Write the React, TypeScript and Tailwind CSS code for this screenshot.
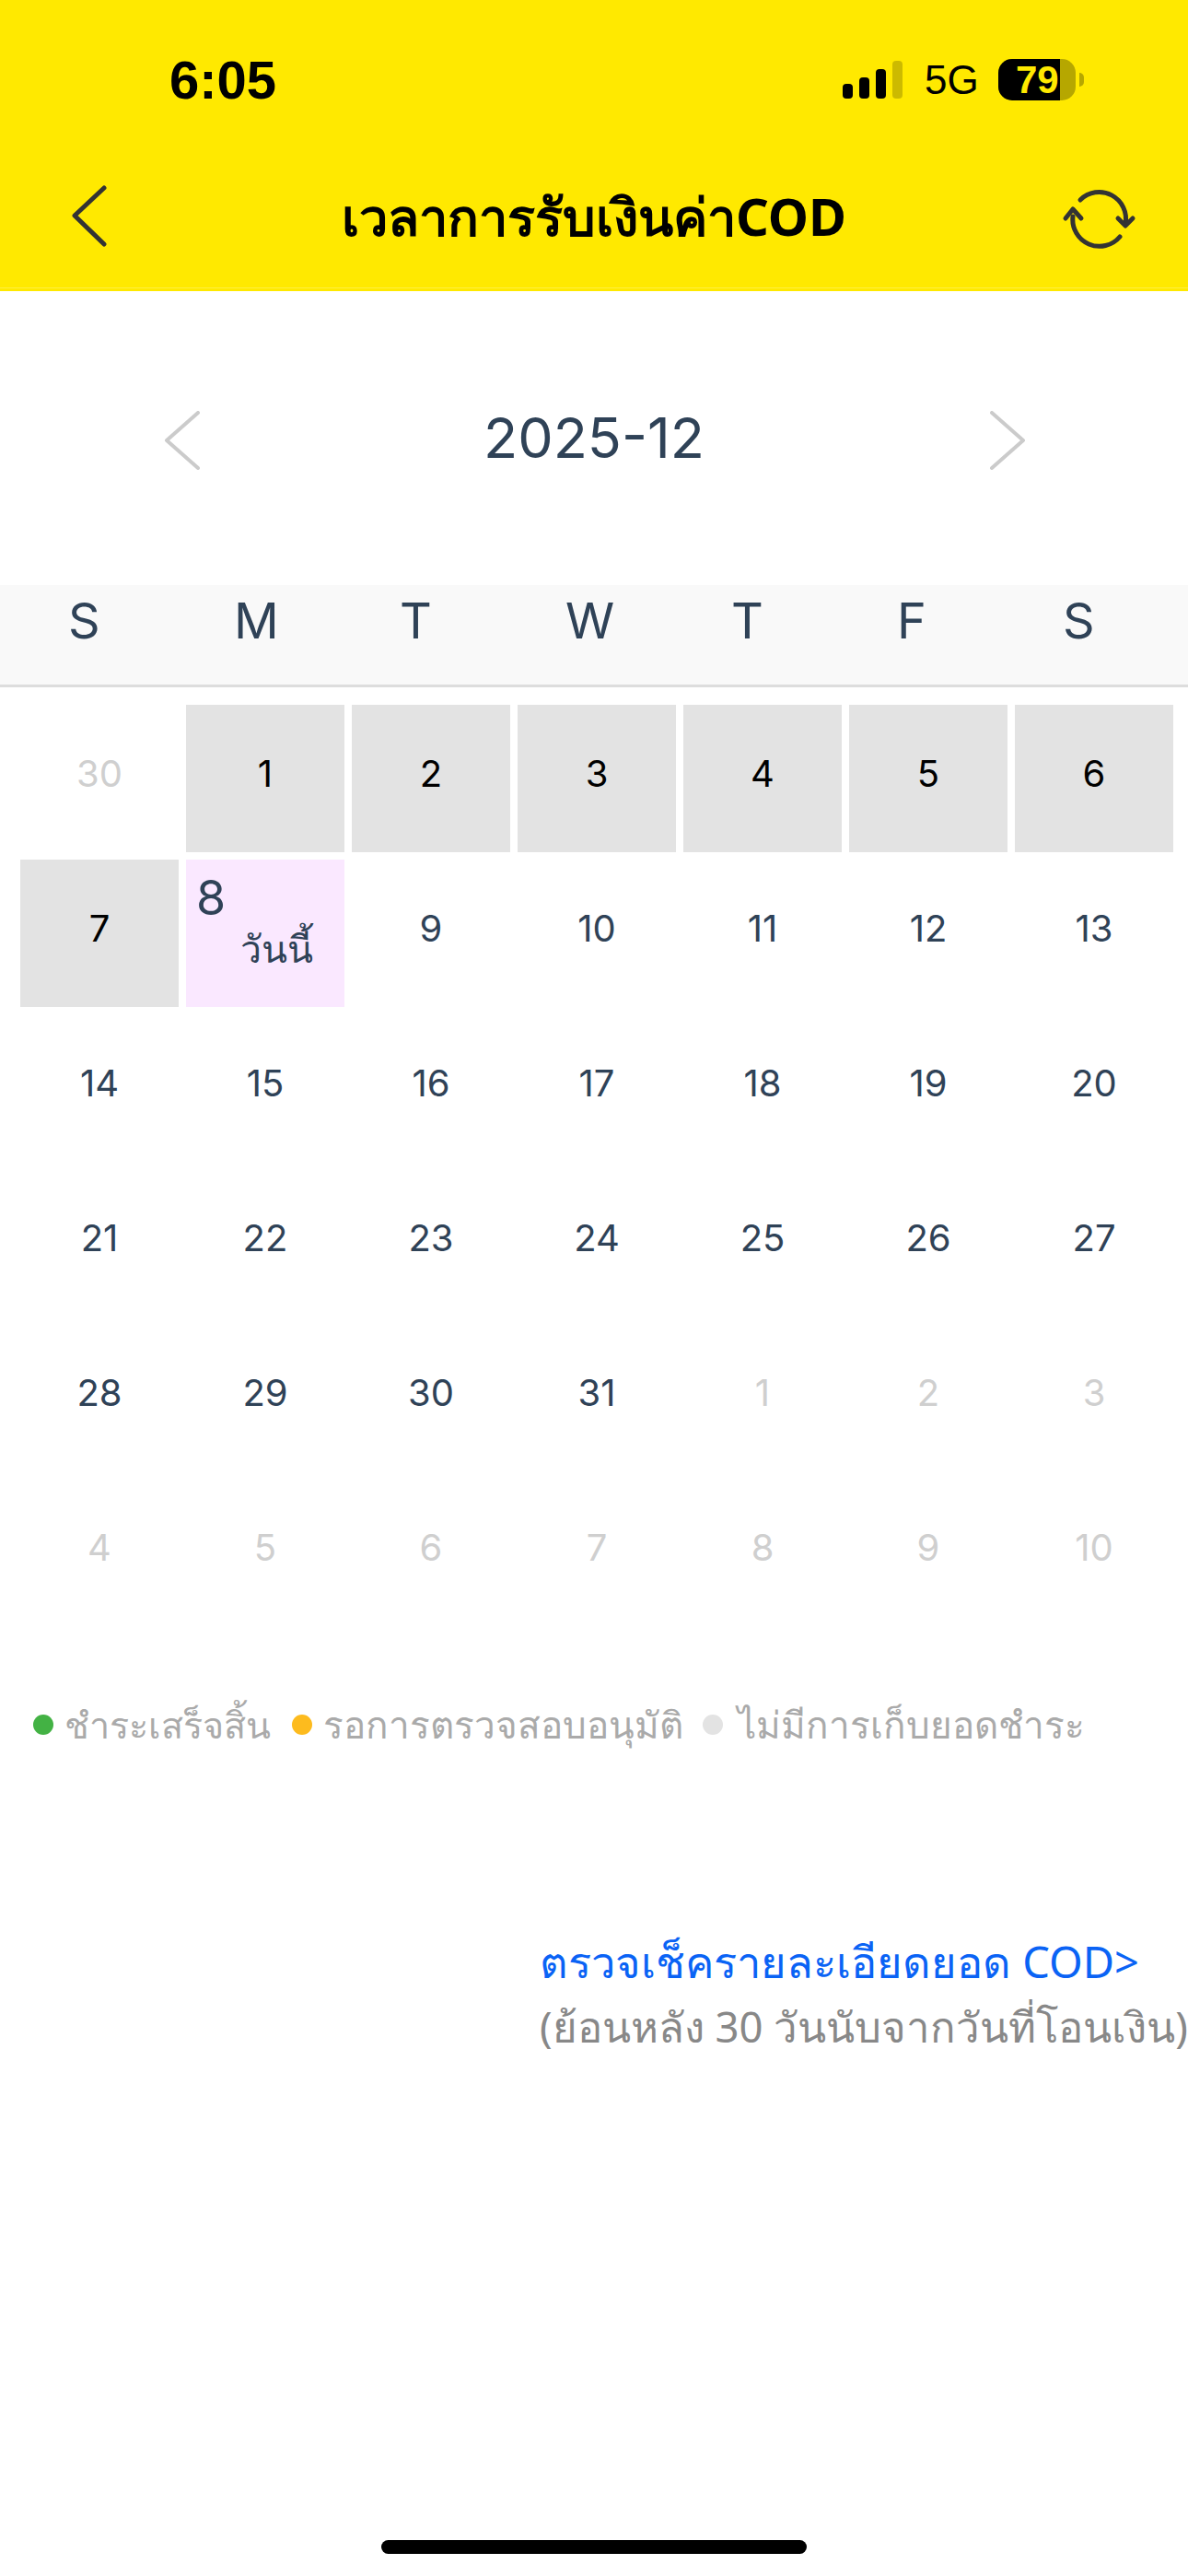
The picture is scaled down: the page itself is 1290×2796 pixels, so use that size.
import React from "react";

const FONT = "font-['Inter','Noto_Sans','Liberation_Sans',sans-serif]";

type Kind = "muted" | "past" | "normal" | "today";
const rows: [string, Kind][][] = [
  [["30", "muted"], ["1", "past"], ["2", "past"], ["3", "past"], ["4", "past"], ["5", "past"], ["6", "past"]],
  [["7", "past"], ["8", "today"], ["9", "normal"], ["10", "normal"], ["11", "normal"], ["12", "normal"], ["13", "normal"]],
  [["14", "normal"], ["15", "normal"], ["16", "normal"], ["17", "normal"], ["18", "normal"], ["19", "normal"], ["20", "normal"]],
  [["21", "normal"], ["22", "normal"], ["23", "normal"], ["24", "normal"], ["25", "normal"], ["26", "normal"], ["27", "normal"]],
  [["28", "normal"], ["29", "normal"], ["30", "normal"], ["31", "normal"], ["1", "muted"], ["2", "muted"], ["3", "muted"]],
  [["4", "muted"], ["5", "muted"], ["6", "muted"], ["7", "muted"], ["8", "muted"], ["9", "muted"], ["10", "muted"]],
];

function Cell({ label, kind }: { label: string; kind: Kind }) {
  if (kind === "today") {
    return (
      <div className="h-[160px] bg-[#fae8ff] pl-[11px] pt-[14px] text-[#2f4257]">
        <div className="text-[52px] leading-[56px]">{label}</div>
        <div className="pl-[48px] text-[41px] leading-[52px] font-['Noto_Sans',sans-serif]">วันนี้</div>
      </div>
    );
  }
  const cls =
    kind === "past"
      ? "bg-[#e3e3e3] text-black"
      : kind === "muted"
        ? "text-[#cfcfcf]"
        : "text-[#2f4257]";
  return <div className={`h-[160px] flex items-center justify-center pb-[10px] text-[40px] ${cls}`}>{label}</div>;
}

function LegendDot({ color }: { color: string }) {
  return <span className={`shrink-0 w-[22px] h-[22px] rounded-full ${color}`} />;
}

export default function App() {
  return (
    <div className={`w-[1290px] h-[2796px] bg-white relative overflow-hidden ${FONT}`}>
      {/* Yellow header */}
      <div className="h-[316px] bg-[#ffe900] flex flex-col">
        <div className="h-[160px] pl-[184px] pr-[113px] pt-[54px] flex items-start justify-between font-['Liberation_Sans',sans-serif]">
          <span className="text-[58px] leading-[66px] font-bold text-black">6:05</span>
          <div className="flex items-center pt-[10px]">
            <svg width="65" height="41" viewBox="0 0 65 41" className="shrink-0">
              <rect x="0" y="25" width="11" height="16" rx="4" fill="#000" />
              <rect x="18" y="18" width="11" height="23" rx="4" fill="#000" />
              <rect x="36" y="9" width="11" height="32" rx="4" fill="#000" />
              <rect x="54" y="0" width="11" height="41" rx="4" fill="#000" fillOpacity="0.2" />
            </svg>
            <span className="ml-[24px] w-[60px] text-[44px] leading-[44px] text-black">5G</span>
            <div className="ml-[20px] flex items-center gap-[4px]">
              <div className="relative w-[84px] h-[45px] rounded-[15px] bg-[#b6a700] overflow-hidden">
                <div className="absolute left-0 top-0 bottom-0 w-[67px] bg-black" />
                <div className="absolute inset-0 flex items-center pl-[19px] text-[42px] font-bold text-[#ffe900]">79</div>
              </div>
              <div className="w-[5px] h-[15px] rounded-r-full bg-[#b6a700]" />
            </div>
          </div>
        </div>
        <div className="relative flex-1 flex items-start justify-center pt-[38px]">
          <svg className="absolute left-[76px] top-[38px]" width="42" height="72" viewBox="0 0 42 72" fill="none">
            <path d="M37 6 L5 36 L37 67" stroke="#333" strokeWidth="5" strokeLinecap="round" strokeLinejoin="round" />
          </svg>
          <span className="text-[56px] font-bold text-black leading-[72px] font-['Noto_Sans','Liberation_Sans',sans-serif]">เวลาการรับเงินค่าCOD</span>
          <svg className="absolute left-[1150px] top-[40px]" width="86" height="76" viewBox="0 0 86 76" fill="none" stroke="#333" strokeWidth="5" strokeLinecap="round" strokeLinejoin="round">
            <path d="M23 17 A29 29 0 0 1 72 43" />
            <path d="M64 37 L72 45 L80 37" />
            <path d="M66 57 A29 29 0 0 1 15 35" />
            <path d="M7 37 L15 27 L24 37" />
          </svg>
          <div className="absolute left-0 right-0 bottom-[3px] h-[1px] bg-[#ffee40]" />
        </div>
      </div>

      {/* Month selector */}
      <div className="h-[319px] flex items-start justify-center relative">
        <svg className="absolute left-[178px] top-[130px]" width="40" height="64" viewBox="0 0 40 64" fill="none">
          <path d="M37 2 L3 32 L37 62" stroke="#cbcbcb" strokeWidth="4" strokeLinecap="round" strokeLinejoin="round" />
        </svg>
        <span className="mt-[128px] text-[61px] leading-[62px] text-[#2f4257]">2025-12</span>
        <svg className="absolute left-[1074px] top-[130px]" width="40" height="64" viewBox="0 0 40 64" fill="none">
          <path d="M3 2 L37 32 L3 62" stroke="#cbcbcb" strokeWidth="4" strokeLinecap="round" strokeLinejoin="round" />
        </svg>
      </div>

      {/* Weekday row */}
      <div className="h-[111px] bg-[#f9f9f9] border-b-[3px] border-[#dddddd] grid grid-cols-[repeat(7,180px)] pl-[74px] text-[54px] leading-[64px] text-[#2f4257]">
        {["S", "M", "T", "W", "T", "F", "S"].map((d, i) => (
          <div key={i} className="pt-[7px]">{d}</div>
        ))}
      </div>

      {/* Calendar grid */}
      <div className="px-[22px] pt-[19px] grid grid-cols-[repeat(7,172px)] gap-[8px]">
        {rows.flat().map(([label, kind], i) => (
          <Cell key={i} label={label} kind={kind} />
        ))}
      </div>

      {/* Legend */}
      <div className="mt-[79px] pl-[36px] flex items-center text-[40.5px] leading-[56px] whitespace-nowrap text-[#aaaaaa] font-['Noto_Sans',sans-serif]">
        <LegendDot color="bg-[#43b244]" />
        <span className="ml-[12px] text-[39.5px]">ชำระเสร็จสิ้น</span>
        <span className="ml-[23px] flex items-center"><LegendDot color="bg-[#fdbb1e]" /></span>
        <span className="ml-[12px]">รอการตรวจสอบอนุมัติ</span>
        <span className="ml-[21px] flex items-center"><LegendDot color="bg-[#e3e3e3]" /></span>
        <span className="ml-[16px]">ไม่มีการเก็บยอดชำระ</span>
      </div>

      {/* Link */}
      <div className="mt-[194px] pl-[586px] whitespace-nowrap font-['Noto_Sans',sans-serif]">
        <div className="text-[47px] leading-[70px] text-[#0a63f5]">ตรวจเช็ครายละเอียดยอด COD&gt;</div>
        <div className="text-[45.5px] leading-[70px] text-[#888888]">(ย้อนหลัง 30 วันนับจากวันที่โอนเงิน)</div>
      </div>

      {/* Home indicator */}
      <div className="absolute left-[414px] bottom-[24px] w-[462px] h-[15px] rounded-full bg-black" />
    </div>
  );
}
